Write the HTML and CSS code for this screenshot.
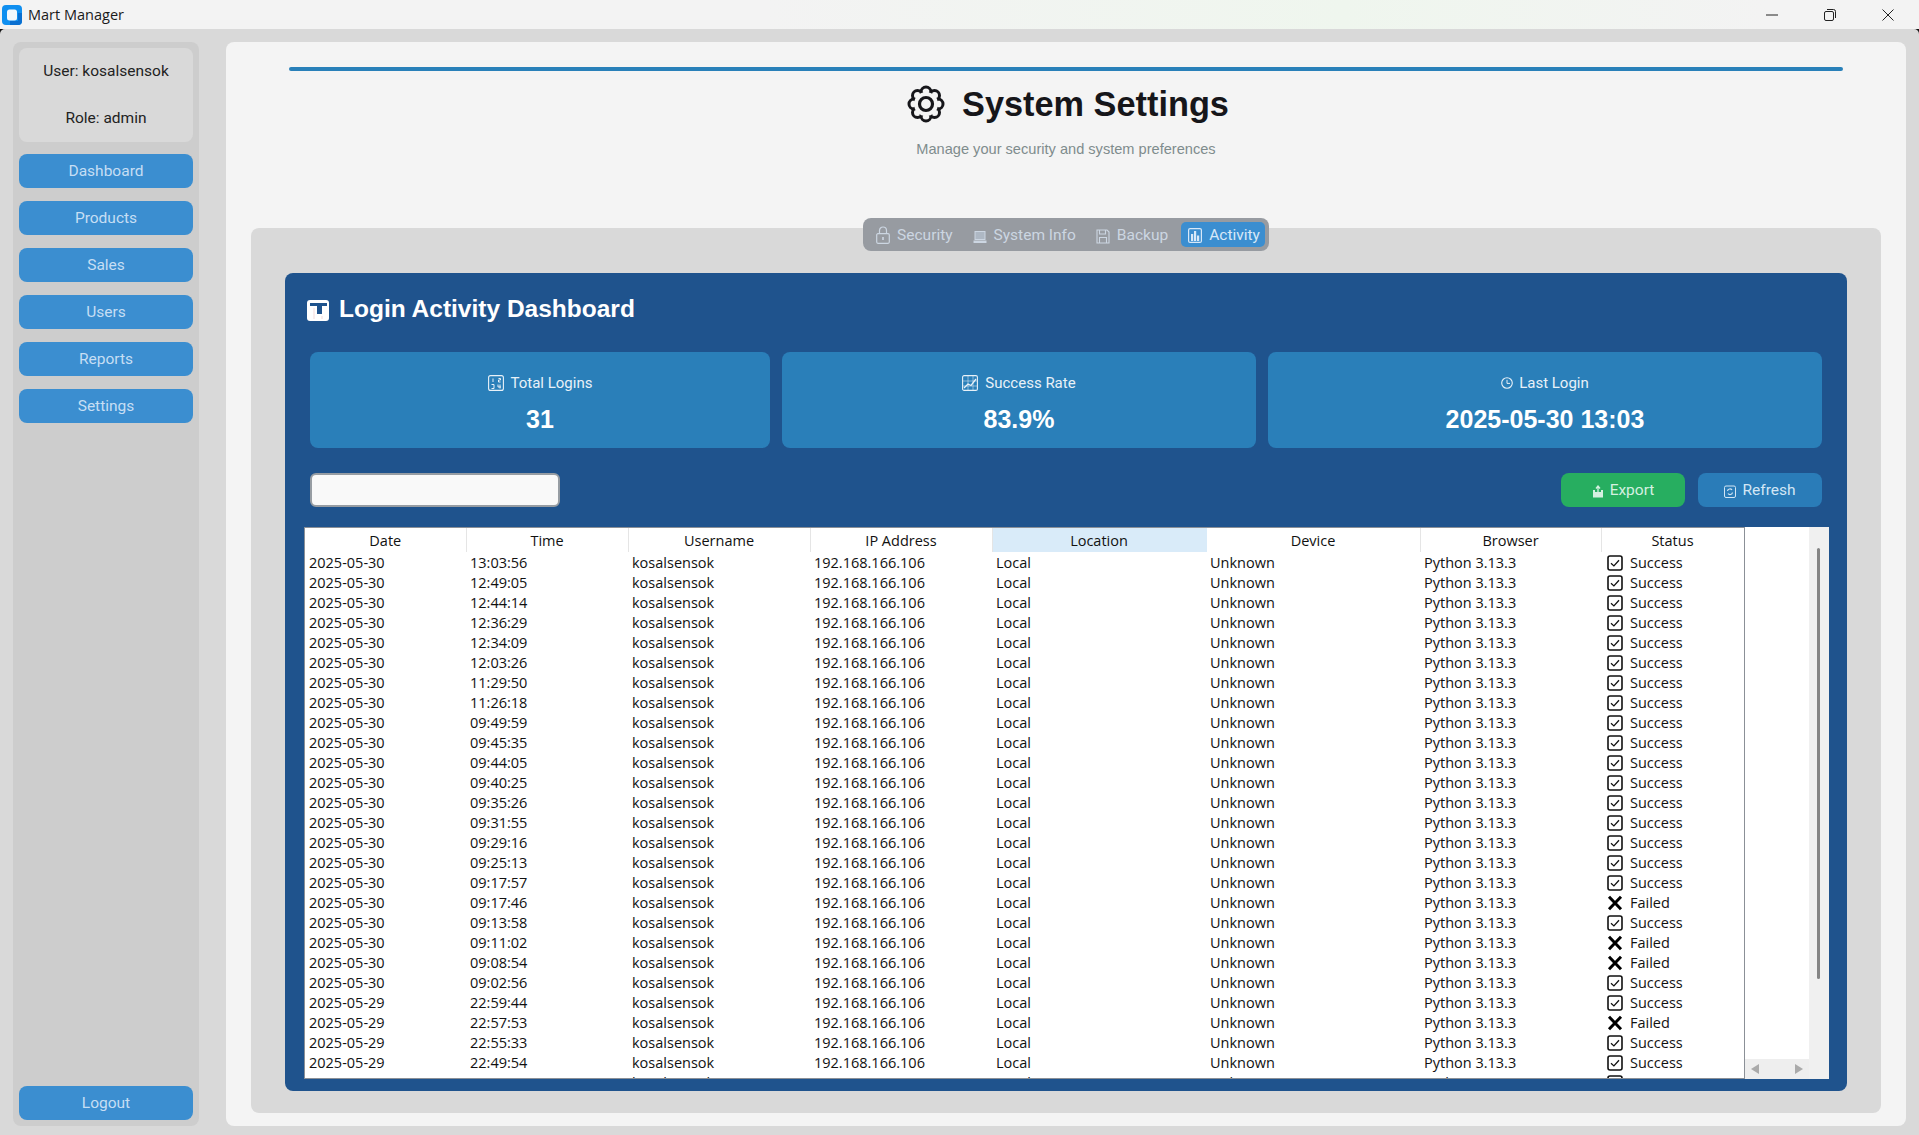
FILE: index.html
```html
<!DOCTYPE html>
<html lang="en">
<head>
<meta charset="utf-8">
<title>Mart Manager</title>
<link rel="stylesheet" href="styles.css">
</head>
<body>
<svg class="defs" width="0" height="0" aria-hidden="true">
  <symbol id="ok" viewBox="0 0 16 16"><rect x="1" y="1" width="14" height="14" rx="2" fill="none" stroke="#111" stroke-width="1.6"/><path d="M4 8.2l2.9 2.7L12 5.2" fill="none" stroke="#111" stroke-width="1.3"/></symbol>
  <symbol id="bad" viewBox="0 0 16 16"><path d="M2 1.8l12 12.4M14 1.8L2 14.2" fill="none" stroke="#000" stroke-width="3"/></symbol>
</svg>
<div class="window">
  <header class="titlebar">
    <svg class="app-icon" viewBox="0 0 20 20"><rect width="20" height="20" rx="4" fill="#0f8ff0"/><path d="M16 16H8v4h8a4 4 0 0 0 4-4V8h-4z" fill="#0a6fd0"/><rect x="5" y="4.500" width="10" height="11" rx="2.500" fill="#f4f8fc"/></svg>
    <span class="app-name">Mart Manager</span>
    <div class="win-controls">
      <svg class="win-btn" viewBox="0 0 12 12"><path d="M0 6h12" stroke="#222" fill="none"/></svg>
      <svg class="win-btn" viewBox="0 0 12 12"><rect x=".5" y="2.500" width="9" height="9" rx="1.500" fill="none" stroke="#222"/><path d="M3 .5h6.500a2 2 0 0 1 2 2V9" fill="none" stroke="#222"/></svg>
      <svg class="win-btn" viewBox="0 0 12 12"><path d="M.5.5l11 11M11.500.5l-11 11" stroke="#222" fill="none"/></svg>
    </div>
  </header>
  <div class="app">
    <aside class="sidebar">
      <div class="user-box"><span>User: kosalsensok</span><span>Role: admin</span></div>
      <button class="nav-btn">Dashboard</button>
      <button class="nav-btn">Products</button>
      <button class="nav-btn">Sales</button>
      <button class="nav-btn">Users</button>
      <button class="nav-btn">Reports</button>
      <button class="nav-btn">Settings</button>
      <button class="nav-btn logout">Logout</button>
    </aside>
    <main class="main">
      <div class="rule"></div>
      <h1 class="page-title">
        <svg class="gear" viewBox="0 0 38 38">
          <g fill="none" stroke="#16161a" stroke-width="3">
            <circle cx="19" cy="7" r="5"/><circle cx="27.500" cy="10.500" r="5"/><circle cx="31" cy="19" r="5"/><circle cx="27.500" cy="27.500" r="5"/><circle cx="19" cy="31" r="5"/><circle cx="10.500" cy="27.500" r="5"/><circle cx="7" cy="19" r="5"/><circle cx="10.500" cy="10.500" r="5"/>
          </g>
          <circle cx="19" cy="19" r="12" fill="#f4f4f4"/>
          <circle cx="19" cy="19" r="6.500" fill="none" stroke="#16161a" stroke-width="3.200"/>
        </svg>
        <span>System Settings</span>
      </h1>
      <p class="subtitle">Manage your security and system preferences</p>
      <section class="tab-panel">
        <nav class="tabs">
          <span class="tab"><svg class="tab-icon" viewBox="0 0 14 18"><path d="M3.500 8V4.500a3.500 3.500 0 0 1 7 0V8" fill="none" stroke="currentColor" stroke-width="1.200"/><rect x=".7" y="7.700" width="12.600" height="9.600" rx="1.200" fill="none" stroke="currentColor" stroke-width="1.200"/><rect x="6.200" y="11" width="1.600" height="3" fill="currentColor"/></svg>Security</span>
          <span class="tab"><svg class="tab-icon" viewBox="0 0 14 18"><rect x="1.500" y="5" width="11" height="9" fill="currentColor"/><rect x="2.500" y="6" width="9" height="7" fill="#aeb8c4"/><rect x=".5" y="14.500" width="13" height="2.500" fill="currentColor"/></svg>System Info</span>
          <span class="tab"><svg class="tab-icon" viewBox="0 0 14 18"><path d="M1 4h10l2 2v11H1z" fill="none" stroke="currentColor" stroke-width="1.100"/><path d="M3.500 4v4h6V4M3.500 17v-5.500h7V17" fill="none" stroke="currentColor" stroke-width="1.100"/></svg>Backup</span>
          <span class="tab active"><svg class="tab-icon" viewBox="0 0 14 18"><rect x=".6" y="2.600" width="12.800" height="13.800" rx="1.500" fill="none" stroke="currentColor" stroke-width="1.200"/><path d="M3 8h2.200v7H3zM6 5h2.200v10H6zM9 9.500h2.200V15H9z" fill="currentColor"/></svg>Activity</span>
        </nav>
        <div class="dash">
          <h2 class="dash-title">
            <svg class="dash-icon" viewBox="0 0 22 21"><rect width="22" height="21" rx="3" fill="#fff"/><path d="M3 3h17v3h-5v8h-5V6H3z" fill="#1f538d"/><path d="M7 8v11M15 16v3" stroke="#f3d9d9" fill="none"/></svg>
            <span>Login Activity Dashboard</span>
          </h2>
          <div class="cards">
            <div class="card">
              <div class="card-label"><svg class="card-icon" viewBox="0 0 16 16"><rect x=".6" y=".6" width="14.800" height="14.800" rx="2" fill="none" stroke="currentColor" stroke-width="1.100"/><path d="M5 3.500v3.500M10.500 3.500h2v1.500h-2v2h2M3.500 9.500h2.500v4h-2.500M10 9.500v2.500h3M12 9.500v4" fill="none" stroke="currentColor"/></svg>Total Logins</div>
              <div class="card-value">31</div>
            </div>
            <div class="card">
              <div class="card-label"><svg class="card-icon" viewBox="0 0 16 16"><rect x=".6" y=".6" width="14.800" height="14.800" rx="1.500" fill="none" stroke="currentColor" stroke-width="1.100"/><path d="M1 6h14M1 11h14M6 1v14M11 1v14" stroke="currentColor" stroke-width=".5" fill="none"/><path d="M2 13l4-4 3 1.500L14 4" stroke="currentColor" stroke-width="1.300" fill="none"/></svg>Success Rate</div>
              <div class="card-value">83.9%</div>
            </div>
            <div class="card">
              <div class="card-label"><svg class="card-icon small" viewBox="0 0 12 12"><circle cx="6" cy="6" r="5.300" fill="none" stroke="currentColor" stroke-width="1.100"/><path d="M6 2.800V6.400H9" fill="none" stroke="currentColor"/></svg>Last Login</div>
              <div class="card-value">2025-05-30 13:03</div>
            </div>
          </div>
          <div class="toolbar">
            <input class="search" type="text" aria-label="Search">
            <div class="actions">
              <button class="act export"><svg class="act-icon" viewBox="0 0 12 13"><path d="M1 5h2v2h6V5h2v7.500H1z" fill="currentColor"/><path d="M6 7V1M4 3.500L6 1l2 2.500" fill="none" stroke="currentColor" stroke-width="1.300"/></svg>Export</button>
              <button class="act refresh"><svg class="act-icon" viewBox="0 0 12 13"><rect x=".5" y="1" width="11" height="11.500" rx="1.500" fill="none" stroke="currentColor"/><path d="M3.500 6a2.500 2.500 0 0 1 4.500-1M8.500 7.500a2.500 2.500 0 0 1-4.500 1" fill="none" stroke="currentColor" stroke-width="1.200"/></svg>Refresh</button>
            </div>
          </div>
          <div class="tree-wrap">
            <div class="tree">
              <table>
                <colgroup><col class="c1"><col class="c2"><col class="c3"><col class="c4"><col class="c5"><col class="c6"><col class="c7"><col class="c8"></colgroup>
                <thead><tr><th>Date</th><th>Time</th><th>Username</th><th>IP Address</th><th class="hot">Location</th><th>Device</th><th>Browser</th><th>Status</th></tr></thead>
                <tbody>
<tr><td>2025-05-30</td><td>13:03:56</td><td>kosalsensok</td><td>192.168.166.106</td><td>Local</td><td>Unknown</td><td>Python 3.13.3</td><td><svg class="st"><use href="#ok"/></svg>Success</td></tr>
<tr><td>2025-05-30</td><td>12:49:05</td><td>kosalsensok</td><td>192.168.166.106</td><td>Local</td><td>Unknown</td><td>Python 3.13.3</td><td><svg class="st"><use href="#ok"/></svg>Success</td></tr>
<tr><td>2025-05-30</td><td>12:44:14</td><td>kosalsensok</td><td>192.168.166.106</td><td>Local</td><td>Unknown</td><td>Python 3.13.3</td><td><svg class="st"><use href="#ok"/></svg>Success</td></tr>
<tr><td>2025-05-30</td><td>12:36:29</td><td>kosalsensok</td><td>192.168.166.106</td><td>Local</td><td>Unknown</td><td>Python 3.13.3</td><td><svg class="st"><use href="#ok"/></svg>Success</td></tr>
<tr><td>2025-05-30</td><td>12:34:09</td><td>kosalsensok</td><td>192.168.166.106</td><td>Local</td><td>Unknown</td><td>Python 3.13.3</td><td><svg class="st"><use href="#ok"/></svg>Success</td></tr>
<tr><td>2025-05-30</td><td>12:03:26</td><td>kosalsensok</td><td>192.168.166.106</td><td>Local</td><td>Unknown</td><td>Python 3.13.3</td><td><svg class="st"><use href="#ok"/></svg>Success</td></tr>
<tr><td>2025-05-30</td><td>11:29:50</td><td>kosalsensok</td><td>192.168.166.106</td><td>Local</td><td>Unknown</td><td>Python 3.13.3</td><td><svg class="st"><use href="#ok"/></svg>Success</td></tr>
<tr><td>2025-05-30</td><td>11:26:18</td><td>kosalsensok</td><td>192.168.166.106</td><td>Local</td><td>Unknown</td><td>Python 3.13.3</td><td><svg class="st"><use href="#ok"/></svg>Success</td></tr>
<tr><td>2025-05-30</td><td>09:49:59</td><td>kosalsensok</td><td>192.168.166.106</td><td>Local</td><td>Unknown</td><td>Python 3.13.3</td><td><svg class="st"><use href="#ok"/></svg>Success</td></tr>
<tr><td>2025-05-30</td><td>09:45:35</td><td>kosalsensok</td><td>192.168.166.106</td><td>Local</td><td>Unknown</td><td>Python 3.13.3</td><td><svg class="st"><use href="#ok"/></svg>Success</td></tr>
<tr><td>2025-05-30</td><td>09:44:05</td><td>kosalsensok</td><td>192.168.166.106</td><td>Local</td><td>Unknown</td><td>Python 3.13.3</td><td><svg class="st"><use href="#ok"/></svg>Success</td></tr>
<tr><td>2025-05-30</td><td>09:40:25</td><td>kosalsensok</td><td>192.168.166.106</td><td>Local</td><td>Unknown</td><td>Python 3.13.3</td><td><svg class="st"><use href="#ok"/></svg>Success</td></tr>
<tr><td>2025-05-30</td><td>09:35:26</td><td>kosalsensok</td><td>192.168.166.106</td><td>Local</td><td>Unknown</td><td>Python 3.13.3</td><td><svg class="st"><use href="#ok"/></svg>Success</td></tr>
<tr><td>2025-05-30</td><td>09:31:55</td><td>kosalsensok</td><td>192.168.166.106</td><td>Local</td><td>Unknown</td><td>Python 3.13.3</td><td><svg class="st"><use href="#ok"/></svg>Success</td></tr>
<tr><td>2025-05-30</td><td>09:29:16</td><td>kosalsensok</td><td>192.168.166.106</td><td>Local</td><td>Unknown</td><td>Python 3.13.3</td><td><svg class="st"><use href="#ok"/></svg>Success</td></tr>
<tr><td>2025-05-30</td><td>09:25:13</td><td>kosalsensok</td><td>192.168.166.106</td><td>Local</td><td>Unknown</td><td>Python 3.13.3</td><td><svg class="st"><use href="#ok"/></svg>Success</td></tr>
<tr><td>2025-05-30</td><td>09:17:57</td><td>kosalsensok</td><td>192.168.166.106</td><td>Local</td><td>Unknown</td><td>Python 3.13.3</td><td><svg class="st"><use href="#ok"/></svg>Success</td></tr>
<tr><td>2025-05-30</td><td>09:17:46</td><td>kosalsensok</td><td>192.168.166.106</td><td>Local</td><td>Unknown</td><td>Python 3.13.3</td><td><svg class="st"><use href="#bad"/></svg>Failed</td></tr>
<tr><td>2025-05-30</td><td>09:13:58</td><td>kosalsensok</td><td>192.168.166.106</td><td>Local</td><td>Unknown</td><td>Python 3.13.3</td><td><svg class="st"><use href="#ok"/></svg>Success</td></tr>
<tr><td>2025-05-30</td><td>09:11:02</td><td>kosalsensok</td><td>192.168.166.106</td><td>Local</td><td>Unknown</td><td>Python 3.13.3</td><td><svg class="st"><use href="#bad"/></svg>Failed</td></tr>
<tr><td>2025-05-30</td><td>09:08:54</td><td>kosalsensok</td><td>192.168.166.106</td><td>Local</td><td>Unknown</td><td>Python 3.13.3</td><td><svg class="st"><use href="#bad"/></svg>Failed</td></tr>
<tr><td>2025-05-30</td><td>09:02:56</td><td>kosalsensok</td><td>192.168.166.106</td><td>Local</td><td>Unknown</td><td>Python 3.13.3</td><td><svg class="st"><use href="#ok"/></svg>Success</td></tr>
<tr><td>2025-05-29</td><td>22:59:44</td><td>kosalsensok</td><td>192.168.166.106</td><td>Local</td><td>Unknown</td><td>Python 3.13.3</td><td><svg class="st"><use href="#ok"/></svg>Success</td></tr>
<tr><td>2025-05-29</td><td>22:57:53</td><td>kosalsensok</td><td>192.168.166.106</td><td>Local</td><td>Unknown</td><td>Python 3.13.3</td><td><svg class="st"><use href="#bad"/></svg>Failed</td></tr>
<tr><td>2025-05-29</td><td>22:55:33</td><td>kosalsensok</td><td>192.168.166.106</td><td>Local</td><td>Unknown</td><td>Python 3.13.3</td><td><svg class="st"><use href="#ok"/></svg>Success</td></tr>
<tr><td>2025-05-29</td><td>22:49:54</td><td>kosalsensok</td><td>192.168.166.106</td><td>Local</td><td>Unknown</td><td>Python 3.13.3</td><td><svg class="st"><use href="#ok"/></svg>Success</td></tr>
<tr><td>2025-05-29</td><td>20:25:46</td><td>kosalsensok</td><td>192.168.166.106</td><td>Local</td><td>Unknown</td><td>Python 3.13.3</td><td><svg class="st"><use href="#ok"/></svg>Success</td></tr>
                </tbody>
              </table>
            </div>
            <div class="tree-side">
              <div class="hscroll"><i class="arrow left"></i><i class="arrow right"></i></div>
            </div>
            <div class="vscroll"><div class="thumb"></div></div>
          </div>
        </div>
      </section>
    </main>
  </div>
</div>
</body>
</html>
```
FILE: styles.css
```css
* { box-sizing: border-box; }
html, body { margin: 0; padding: 0; height: 100%; }
body { font-family: Roboto, "Liberation Sans", sans-serif; background: #111; overflow: hidden; }
.defs { position: absolute; }
.window { width: 1919px; height: 1135px; display: flex; flex-direction: column; }

.titlebar { height: 29px; flex: none; display: flex; align-items: center; padding-left: 2px; background: linear-gradient(90deg, #f3f3f3 40%, #eff6ee 70%, #f3f3f3 92%); }
.app-icon { width: 20px; height: 20px; }
.app-name { margin-left: 6px; font: 14.500px "Open Sans", "Noto Sans", sans-serif; color: #1a1a1a; }
.win-controls { margin-left: auto; display: flex; gap: 46px; padding-right: 25px; }
.win-btn { width: 12px; height: 12px; }

.app { flex: 1; min-height: 0; display: flex; gap: 27px; padding: 13px 13px 9px; background: #d9d9d9; border-radius: 5px 5px 0 0; }

.sidebar { width: 186px; flex: none; display: flex; flex-direction: column; gap: 13px; padding: 6px; background: #cdcdcd; border-radius: 8px; }
.user-box { height: 94px; margin-bottom: -1px; display: flex; flex-direction: column; justify-content: space-between; align-items: center; padding: 13px 0 14px; background: #d9d9d9; border-radius: 8px; font-size: 15.500px; line-height: 20px; color: #222; }
.nav-btn { height: 34px; flex: none; border: 0; padding: 0; border-radius: 8px; background: #3b8ed0; color: #c6def4; font: 15.500px Roboto, sans-serif; }
.logout { margin-top: auto; }

.main { flex: 1; min-width: 0; display: flex; flex-direction: column; background: #f4f4f4; border-radius: 8px; }
.rule { height: 4px; flex: none; margin: 25px 63px 0; background: #2980b9; border-radius: 2px; }
.page-title { margin: 13px 0 0; display: flex; justify-content: center; align-items: center; gap: 17px; padding-left: 4px; font: bold 34.300px/40px "Liberation Sans", sans-serif; color: #16161a; }
.gear { width: 38px; height: 38px; }
.subtitle { margin: 15px 0 0; text-align: center; font: 14.600px/20px "Liberation Sans", sans-serif; color: #7f8c8d; }

.tab-panel { flex: 1; min-height: 0; margin: 69px 25px 13px; display: flex; flex-direction: column; align-items: center; background: #d9d9d9; border-radius: 8px; }
.tabs { margin-top: -10px; height: 33px; display: flex; align-items: center; gap: 8px; padding: 0 4px 0 6px; background: #979ba1; border-radius: 8px; font-size: 15.500px; color: #ccd6e2; }
.tab { height: 25px; display: flex; align-items: center; gap: 7px; padding: 0 5px 0 7px; border-radius: 5px; white-space: nowrap; }
.tab.active { background: #3b8ed0; color: #d7e8f8; }
.tab-icon { width: 14px; height: 18px; }

.dash { align-self: stretch; flex: 1; min-height: 0; margin: 22px 34px 22px; padding: 21px 0 12px; display: flex; flex-direction: column; background: #1f538d; border-radius: 8px; }
.dash-title { margin: 0 0 0 22px; height: 30px; display: flex; align-items: center; gap: 10px; font: bold 24.500px/30px "Liberation Sans", sans-serif; color: #fff; }
.dash-icon { width: 22px; height: 21px; margin-top: 3px; }

.cards { margin: 28px 25px 0; display: grid; grid-template-columns: 460px 474px 554px; gap: 12px; }
.card { height: 96px; background: #2a7fb9; border-radius: 8px; color: #fff; display: flex; flex-direction: column; align-items: center; padding-top: 21px; }
.card-label { height: 20px; display: flex; align-items: center; gap: 7px; font-size: 15px; color: #e8f1f8; }
.card-icon { width: 16px; height: 16px; }
.card-icon.small { width: 12px; height: 12px; margin-right: -1px; }
.card-value { margin-top: 11px; font: bold 25px/30px "Liberation Sans", sans-serif; color: #fff; }

.toolbar { margin: 25px 25px 0; display: flex; justify-content: space-between; }
.search { width: 250px; height: 34px; background: #f9f9f9; border: 2px solid #979da3; border-radius: 6px; padding: 0 8px; }
.actions { display: flex; gap: 13px; }
.act { width: 124px; height: 34px; border: 0; padding: 0; border-radius: 8px; display: flex; align-items: center; justify-content: center; gap: 6px; font: 15.500px Roboto, sans-serif; color: #d2e6f5; }
.export { background: #27ae60; color: #d5f0e0; }
.refresh { background: #2a7cb8; }
.act-icon { width: 12px; height: 13px; margin-top: 3px; }

.tree-wrap { flex: 1; min-height: 0; margin: 20px 18px 0 19px; display: flex; background: #fff; overflow: hidden; }
.tree { width: 1441px; flex: none; overflow: hidden; border: 1px solid #8b9097; border-width: 1px 1px 1px 1px; background: #fff; }
.tree table { width: 1439px; border-collapse: collapse; table-layout: fixed; font: 14.500px "Open Sans", "Noto Sans", sans-serif; color: #111; }
.c1 { width: 161px; } .c2 { width: 162px; } .c3 { width: 182px; } .c4 { width: 182px; }
.c5 { width: 214px; } .c6 { width: 214px; } .c7 { width: 181px; } .c8 { width: 143px; }
.tree th { height: 24px; padding: 0; font-weight: 400; text-align: center; border-right: 1px solid #e5e5e5; }
.tree th.hot { background: #d9ebf9; border-right-color: #d9ebf9; }
.tree td { height: 20px; padding: 0 0 0 4px; white-space: nowrap; overflow: hidden; }
.st { width: 16px; height: 16px; vertical-align: -3px; margin: 0 7px 0 2px; }
.tree-side { flex: 1; display: flex; flex-direction: column; justify-content: flex-end; }
.hscroll { height: 20px; background: #eeeeee; display: flex; align-items: center; justify-content: space-between; padding: 0 6px; }
.arrow { width: 0; height: 0; border-style: solid; border-width: 5px 0; border-color: transparent; }
.arrow.left { border-right: 8px solid #aaa; }
.arrow.right { border-left: 8px solid #aaa; }
.vscroll { width: 20px; flex: none; background: #f0f0f0; padding: 21px 0 0 8px; }
.thumb { width: 3px; height: 431px; background: #858585; border-radius: 2px; }
```
